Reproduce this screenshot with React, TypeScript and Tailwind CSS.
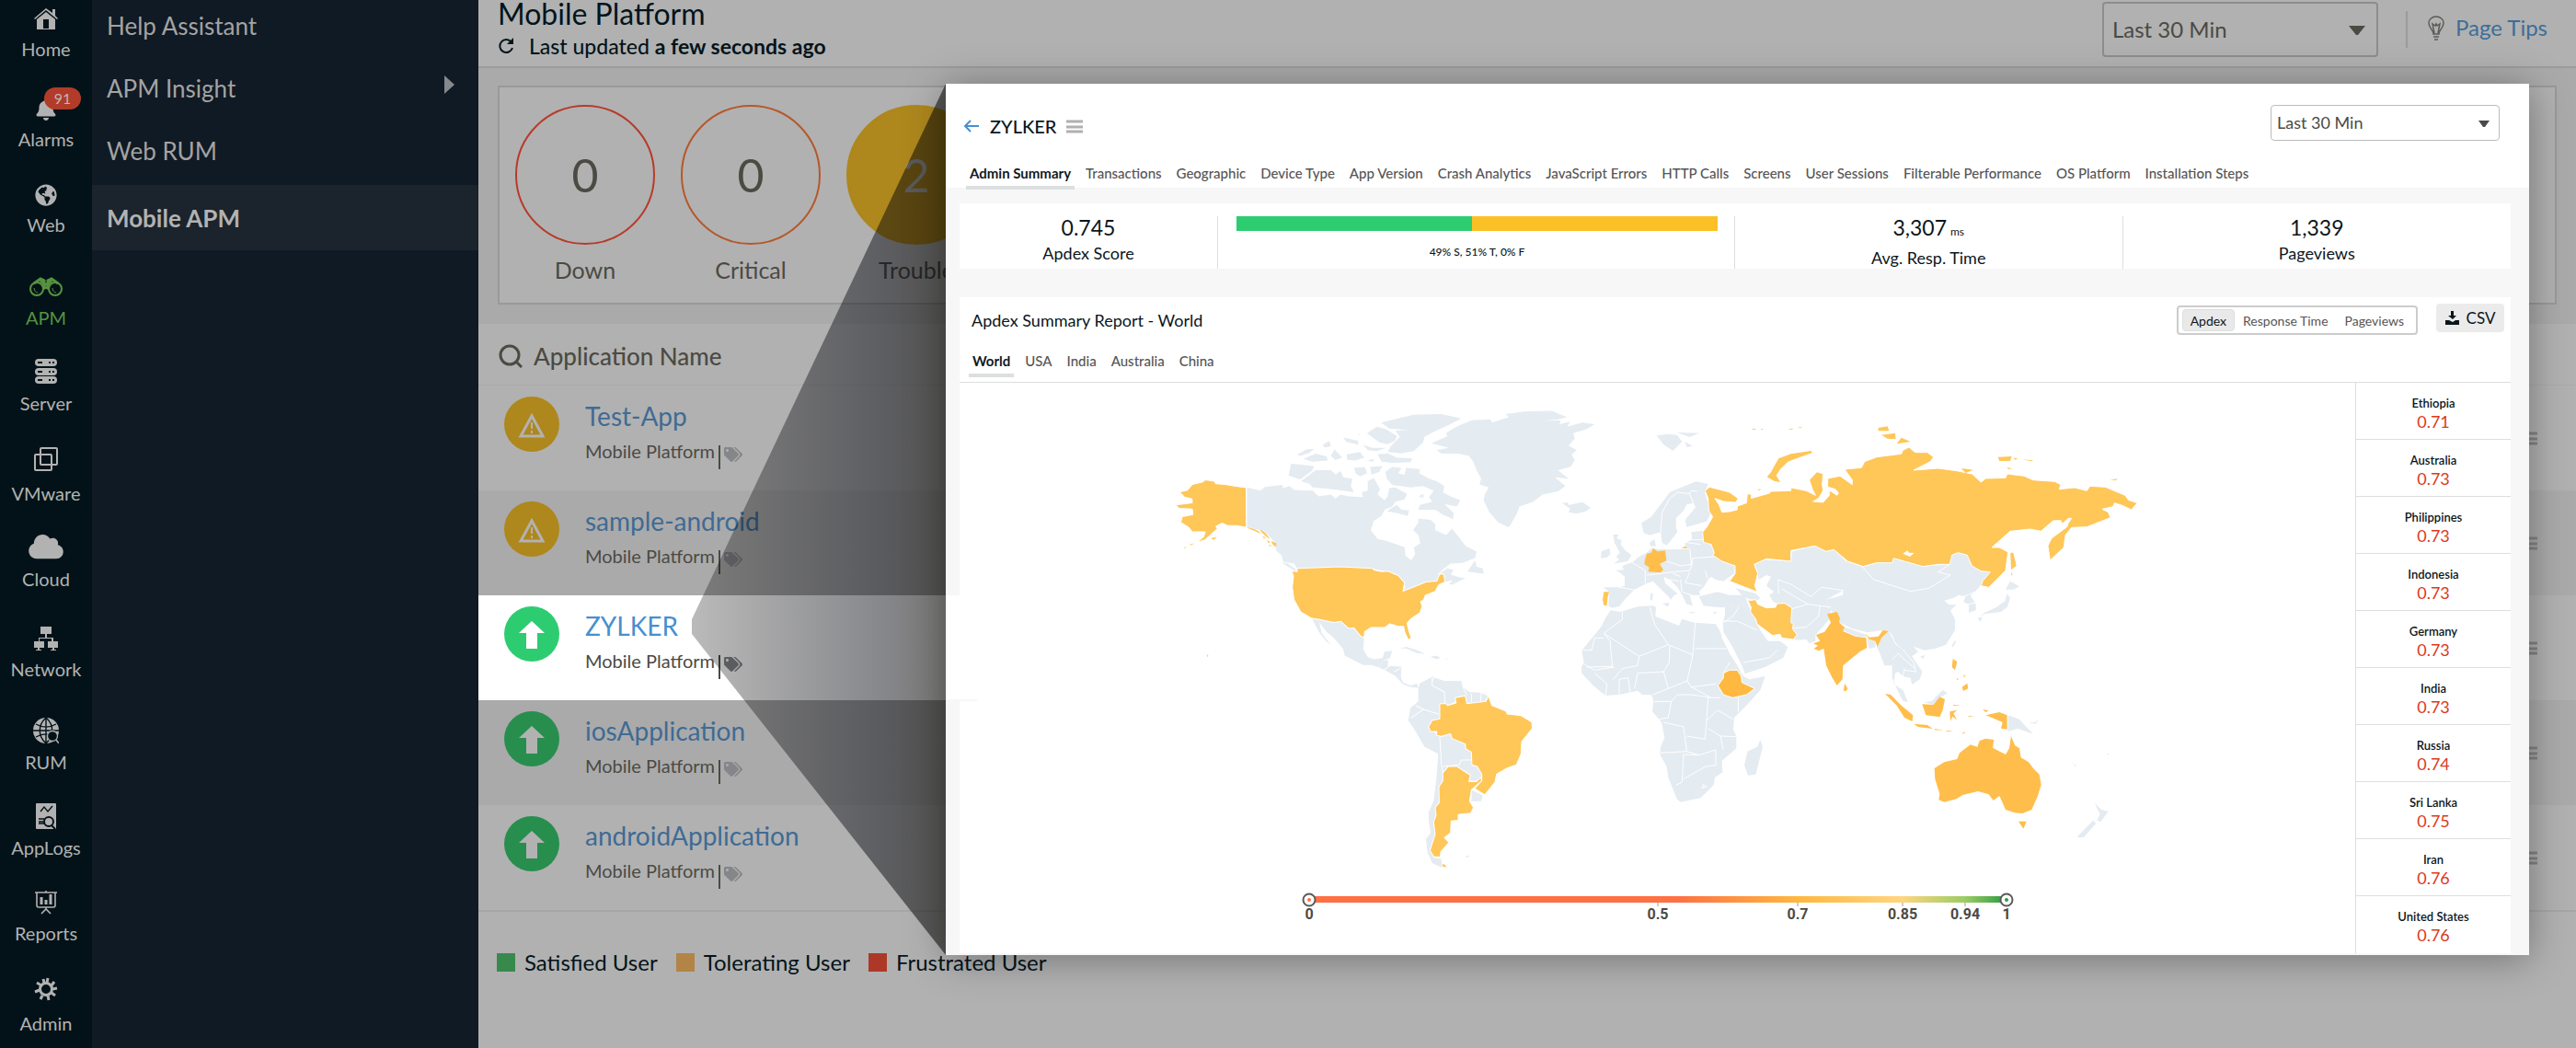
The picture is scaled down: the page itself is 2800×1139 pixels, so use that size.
import { ReactNode } from "react";
import { FaBell, FaCloud, FaGlobeAmericas, FaTags } from "react-icons/fa";

type MenuItem = { label: string; height: string; icon: ReactNode; badge?: string; active?: boolean };
type AppRow = { name: string; status: "trouble" | "up"; spotlight?: boolean };

const svgProps = { fill: "currentColor", stroke: "none" };

const menu: MenuItem[] = [
  {
    label: "Home",
    height: "h-[65px]",
    icon: (
      <svg viewBox="0 0 26 24" className="w-[26px] h-6" {...svgProps}>
        <path d="M13 0 0 11l1 1L13 2l12 10 1-1-3-3V1h-3v4z" />
        <path fillRule="evenodd" d="M13 4 3 12v11h20V12zM10 12h6v10h-6z" />
      </svg>
    ),
  },
  { label: "Alarms", height: "h-[98px]", badge: "91", icon: <FaBell className="w-6 h-6" /> },
  { label: "Web", height: "h-[93px]", icon: <FaGlobeAmericas className="w-6 h-6" /> },
  {
    label: "APM",
    height: "h-[101px]",
    active: true,
    icon: (
      <svg viewBox="0 0 36 24" className="w-9 h-6" fill="none" stroke="currentColor" strokeWidth="2">
        <circle cx="8" cy="13" r="7" />
        <circle cx="28" cy="13" r="7" />
        <path d="M5 7 12 2l4 2v8M31 7l-7-5-4 2v8M15 13c2-2 4-2 6 0M12 4l4 4h4l4-4" strokeWidth="3" />
        <path d="M5 12c0 3 2 5 4 5M25 12c0 3 2 5 4 5" strokeWidth="1" />
      </svg>
    ),
  },
  {
    label: "Server",
    height: "h-[93px]",
    icon: (
      <svg viewBox="0 0 24 28" className="w-6 h-7" {...svgProps}>
        {[0, 10, 19].map((y) => (
          <g key={y}>
            <rect y={y} width="24" height="8" rx="4" />
            <path d={`M3 ${y + 4}h5M15 ${y + 4}h2M19 ${y + 4}h2`} stroke="#031218" strokeWidth="2" />
          </g>
        ))}
      </svg>
    ),
  },
  {
    label: "VMware",
    height: "h-[98px]",
    icon: (
      <svg viewBox="0 0 26 26" className="w-[26px] h-[26px] mb-1" fill="none" stroke="currentColor" strokeWidth="2">
        <rect x="7" y="1" width="18" height="18" rx="1" />
        <rect x="1" y="8" width="18" height="17" rx="1" />
      </svg>
    ),
  },
  { label: "Cloud", height: "h-[93px]", icon: <FaCloud className="w-[38px] h-[30px]" /> },
  {
    label: "Network",
    height: "h-[98px]",
    icon: (
      <svg viewBox="0 0 26 26" className="w-[26px] h-[26px]" {...svgProps}>
        <path d="M7 0h12v8H7zM12 8h2v4h7v4h5v7h-4v2h2v1h-6v-1h2v-2h-5v-7h4v-3H6v3h5v7H6v2h2v1H2v-1h2v-2H0v-7h5v-4h7zM8 6h10v1H8z" />
      </svg>
    ),
  },
  {
    label: "RUM",
    height: "h-[101px]",
    icon: (
      <svg viewBox="0 0 28 28" className="w-7 h-7">
        <circle cx="14" cy="14" r="14" fill="currentColor" />
        <path
          d="M14 0v28M0 14h28M3 7c7 4 15 4 22 0M3 21c7-4 15-4 22 0M14 0c-9 8-9 20 0 28M14 0c9 8 9 20 0 28"
          fill="none"
          stroke="#031218"
          strokeWidth="1.4"
        />
        <circle cx="21" cy="20" r="5.5" fill="#031218" stroke="currentColor" strokeWidth="1.3" />
        <path d="m25 24 3 4" stroke="currentColor" strokeWidth="1.6" />
      </svg>
    ),
  },
  {
    label: "AppLogs",
    height: "h-[93px]",
    icon: (
      <svg viewBox="0 0 22 28" className="w-[22px] h-7">
        <rect width="22" height="28" rx="1" fill="currentColor" />
        <g fill="none" stroke="#031218" strokeWidth="1.4">
          <path d="m5 9 4-5 4 5 5-6M3 17h6M3 20h5M3 22h6" />
          <circle cx="14" cy="20" r="5" strokeWidth="2" />
          <path d="m17 24 4 4" strokeWidth="2" />
        </g>
      </svg>
    ),
  },
  {
    label: "Reports",
    height: "h-[93px]",
    icon: (
      <svg viewBox="0 0 24 26" className="w-6 h-[26px]" fill="none" stroke="currentColor" strokeWidth="1.6">
        <path d="M0 2h24M12 0v2M2 2v14q0 2 2 2h16q2 0 2-2V2M12 18v3M7 25l5-5 5 5" />
        <path d="M7 7v8M12 10v5M17 4v11" strokeWidth="3" />
      </svg>
    ),
  },
  {
    label: "Admin",
    height: "h-[98px]",
    icon: (
      <svg viewBox="0 0 26 26" className="w-[26px] h-[26px] mb-1" fill="none" stroke="currentColor">
        <circle cx="13" cy="13" r="6.5" strokeWidth="3" />
        <path
          d="M15 1l-1 5M22 5l-3 4M25 12l-5 1M23 20l-4-3M16 25l-1-5M7 24l2-4M1 16l5-2M3 6l5 3M10 2l1 4"
          strokeWidth="3"
        />
      </svg>
    ),
  },
];

const apps: AppRow[] = [
  { name: "Test-App", status: "trouble" },
  { name: "sample-android", status: "trouble" },
  { name: "ZYLKER", status: "up", spotlight: true },
  { name: "iosApplication", status: "up" },
  { name: "androidApplication", status: "up" },
];

const tabs = [
  "Admin Summary",
  "Transactions",
  "Geographic",
  "Device Type",
  "App Version",
  "Crash Analytics",
  "JavaScript Errors",
  "HTTP Calls",
  "Screens",
  "User Sessions",
  "Filterable Performance",
  "OS Platform",
  "Installation Steps",
];

const regions = ["World", "USA", "India", "Australia", "China"];

const scores = [
  ["Ethiopia", "0.71"],
  ["Australia", "0.73"],
  ["Philippines", "0.73"],
  ["Indonesia", "0.73"],
  ["Germany", "0.73"],
  ["India", "0.73"],
  ["Russia", "0.74"],
  ["Sri Lanka", "0.75"],
  ["Iran", "0.76"],
  ["United States", "0.76"],
];

const legend = [
  ["Satisfied User", "bg-[#388a4c]"],
  ["Tolerating User", "bg-[#b28446]"],
  ["Frustrated User", "bg-[#ad3828]"],
];

function Sidebar() {
  return (
    <nav className="w-[100px] shrink-0 bg-[#031218] text-[#b2b2b2]">
      {menu.map((item) => (
        <a
          key={item.label}
          href="#"
          className={`${item.height} ${item.active ? "text-[#57933f]" : ""} flex flex-col items-center justify-end text-[20px] leading-6`}
        >
          <span className="relative mb-2">
            {item.icon}
            {item.badge && (
              <span className="absolute left-[10px] -top-3 w-10 h-6 rounded-full bg-[#b23c2a] text-center text-[16px] leading-6 text-[#c4b5b2]">
                {item.badge}
              </span>
            )}
          </span>
          {item.label}
        </a>
      ))}
    </nav>
  );
}

function SubNav() {
  return (
    <nav className="w-[420px] shrink-0 bg-[#0f1a24] pt-[11px] text-[26px] leading-[34px] text-[#a3a3a3]">
      <ul className="flex flex-col gap-[34px] pl-4">
        <li>
          <a href="#">Help Assistant</a>
        </li>
        <li className="flex items-center justify-between pr-[26px]">
          <a href="#">APM Insight</a>
          <svg viewBox="0 0 11 20" className="w-[11px] h-5 mb-2" fill="#86898c">
            <path d="M0 0l11 10L0 20z" />
          </svg>
        </li>
        <li>
          <a href="#">Web RUM</a>
        </li>
      </ul>
      <a href="#" className="mt-5 flex h-[71px] items-center bg-[#1b232c] pl-4 font-bold text-[#b2b2b2]">
        Mobile APM
      </a>
    </nav>
  );
}

function StatusIcon({ app }: { app: AppRow }) {
  if (app.status === "trouble") {
    return (
      <svg viewBox="0 0 60 60" className="w-[60px] h-[60px]">
        <circle cx="30" cy="30" r="30" fill="#ae871d" />
        <path d="M30 21 18 43h24z" fill="none" stroke="#b2b2b2" strokeWidth="3" />
        <path d="M30 28v7M30 37v3" stroke="#b2b2b2" strokeWidth="2" />
      </svg>
    );
  }
  return (
    <svg viewBox="0 0 60 60" className="w-[60px] h-[60px]">
      <circle cx="30" cy="30" r="30" fill={app.spotlight ? "#2ecc71" : "#288e4e"} />
      <path d="M30 16 44 29h-8v17H24V29h-8z" fill={app.spotlight ? "#ffffff" : "#b2b2b2"} />
    </svg>
  );
}

function Bars({ className }: { className: string }) {
  return (
    <svg viewBox="0 0 18 15" className={className} stroke="currentColor" strokeWidth="3">
      <path d="M0 2h18M0 8h18M0 13h18" />
    </svg>
  );
}

function Dashboard() {
  return (
    <main className="min-w-0 flex-1 bg-[#b1b1b1] text-[#03141a]">
      <header className="flex h-[74px] justify-between border-b-2 border-[#9b9b9b] pl-[21px] pr-[31px]">
        <div>
          <h1 className="text-[32px] leading-[30px]">Mobile Platform</h1>
          <p className="mt-2 flex items-center text-[23px] leading-6">
            <svg viewBox="0 0 18 18" className="mr-4 w-[18px] h-[18px]" fill="none" stroke="currentColor" strokeWidth="2">
              <path d="M15 5a7 7 0 1 0 1 6" />
              <path d="M17 0v7h-7z" fill="currentColor" stroke="none" />
            </svg>
            <span className="font-medium">
              Last updated <b>a few seconds ago</b>
            </span>
          </p>
        </div>
        <div className="flex items-start text-[24px]">
          <div className="relative mt-[2px]">
            <select
              aria-label="Dashboard period"
              className="h-[60px] w-[300px] appearance-none rounded border-2 border-[#8d8d8d] pl-[9px] text-[#4b4a43]"
            >
              <option>Last 30 Min</option>
            </select>
            <svg viewBox="0 0 18 10" className="absolute right-[14px] top-[26px] w-[18px] h-[10px]" fill="#4b4a43">
              <path d="M0 0h18l-8 10H8z" />
            </svg>
          </div>
          <div className="ml-[30px] mt-3 h-10 w-[2px] bg-[#9b9b9b]" />
          <a href="#" className="ml-[22px] mt-3 flex items-center gap-3 leading-9 text-[#3d6e98]">
            <svg viewBox="0 0 18 27" className="w-[18px] h-[27px]" fill="none" stroke="#5a5a58" strokeWidth="1.5">
              <path d="M6 20c0-5-5-6-5-12a8 7 0 0 1 16 0c0 6-5 7-5 12zM7 19 5 9l3 2 1-2 1 2 3-2-2 10M6 23h6M7 26h4" />
            </svg>
            Page Tips
          </a>
        </div>
      </header>

      <section className="bg-[#aaaaaa] px-[21px] pb-[21px] pt-[19px]">
        <div className="flex h-[238px] gap-7 border-2 border-[#999999] bg-[#b1b1b1] pl-[17px] pt-[19px] text-[25px] leading-[30px] text-[#4b4a43]">
          {[
            ["Down", "0", "border-[#b83a2a]"],
            ["Critical", "0", "border-[#b5582a]"],
            ["Trouble", "2", "border-[#ae871d] bg-[#ae871d] text-[#b2b2b2]"],
          ].map(([label, count, style]) => (
            <div key={label} className="text-center">
              <div className={`${style} flex h-[152px] w-[152px] items-center justify-center rounded-full border-2 text-[50px]`}>
                {count}
              </div>
              <div className="mt-3">{label}</div>
            </div>
          ))}
        </div>
      </section>

      <div className="flex h-[67px] items-center gap-3 border-b border-[#a9a9a9] pb-1 pl-[22px] pt-2 text-[26px] font-medium text-[#4b4a43]">
        <svg viewBox="0 0 26 26" className="w-[26px] h-[26px]" fill="none" stroke="currentColor" strokeWidth="3">
          <circle cx="12" cy="12" r="10" />
          <path d="m19 19 6 6" />
        </svg>
        Application Name
      </div>
      <ul className="border-b-2 border-[#a6a6a6]">
        {apps.map((app, i) => (
          <li key={app.name} className={`${i % 2 ? "bg-[#aaaaaa]" : ""} flex h-[114px] items-center justify-between pr-[42px]`}>
            <div className={`${app.spotlight ? "bg-white" : ""} flex h-[114px] w-[508px] gap-7 pl-7`}>
              <div className="mt-3">
                <StatusIcon app={app} />
              </div>
              <div className="pt-[17px]">
                <a href="#" className={`${app.spotlight ? "text-[#468fd0]" : "text-[#3f6b94]"} block text-[28px] leading-8`}>
                  {app.name}
                </a>
                <div className="mt-[10px] flex text-[20px] leading-6 text-[#4b4a43]">
                  Mobile Platform
                  <span className="ml-1 mt-[6px] h-[26px] w-[2px] bg-[#4b4a43]" />
                  <FaTags className="ml-1 mt-[6px] h-5 w-5 text-[#85868a]" />
                </div>
              </div>
            </div>
            <Bars className="h-[15px] w-[18px] text-[#848484]" />
          </li>
        ))}
      </ul>

      <ul className="mt-10 flex gap-5 pl-5 text-[24px] leading-[30px]">
        {legend.map(([label, color]) => (
          <li key={label} className="flex items-center gap-[10px]">
            <span className={`${color} h-5 w-5`} />
            {label}
          </li>
        ))}
      </ul>
    </main>
  );
}

// Americas are on their own grid, everything east of Iceland shares the second one
function WorldMap() {
  return (
    <svg viewBox="1043 416 1517 620" className="h-[620px] min-w-0 flex-1" role="img" aria-label="Apdex by country">
      <defs>
        <linearGradient id="scale">
          <stop offset="0" stopColor="#ff7043" />
          <stop offset="0.53" stopColor="#ff7043" />
          <stop offset="0.7" stopColor="#ffb740" />
          <stop offset="0.85" stopColor="#ffd580" />
          <stop offset="0.94" stopColor="#9ccc65" />
          <stop offset="1" stopColor="#2e9a41" />
        </linearGradient>
      </defs>

      <g transform="translate(1260 430) scale(.33333 .34437)" strokeLinejoin="round">
        <g fill="#e4ebf1">
          <path d="M888 150 940 128 935 118 975 95 1020 78 1080 75 1085 85 1140 68 1130 58 1190 50 1280 48 1330 68 1300 75 1250 80 1310 78 1305 90 1340 82 1330 98 1380 85 1420 90 1395 105 1350 118 1355 135 1335 158 1362 172 1345 185 1355 205 1340 225 1300 235 1335 262 1290 258 1325 285 1300 302 1250 312 1220 335 1175 350 1165 375 1150 400 1140 415 1105 400 1075 365 1058 330 1062 310 1075 290 1045 280 1050 262 1035 235 1025 210 1010 190 975 183 920 183 905 172 945 165Z" />
          <path d="M724 85 780 72 830 60 920 58 985 72 950 90 900 112 865 130 860 148 830 175 790 182 745 178 755 160 785 130 770 110 820 108 750 104Z" />
          <path d="M678 118 710 98 740 106 775 128 768 142 745 153 720 148 700 135Z" />
          <path d="M712 185 745 182 775 195 825 198 820 210 760 212 725 208Z" />
          <path d="M450 186 480 170 506 168 490 180 460 190ZM470 200 510 183 545 192 550 205 500 208ZM533 155 555 143 560 160 540 164ZM600 132 648 142 650 155 610 145ZM612 185 655 178 668 195 640 205 612 202ZM665 155 695 165 740 165 710 175 680 172ZM560 190 572 170 597 195 575 203ZM648 118 656 122 650 124ZM678 205 700 200 698 208Z" />
          <path d="M430 215 505 222 500 235 460 265 422 252Z" />
          <path d="M462 270 510 235 560 235 575 248 592 238 600 258 630 262 625 285 635 305 600 300 560 295 500 290 490 278ZM636 228 670 225 678 245 655 255 640 245ZM688 225 728 222 718 240 692 250Z" />
          <path d="M738 240 760 225 790 228 780 245 800 250 805 228 850 232 848 245 880 262 905 270 930 285 925 305 950 318 982 330 970 350 930 342 960 370 958 390 925 375 900 360 845 360 850 345 890 335 880 320 895 300 860 285 820 290 760 282 742 262Z" />
          <path d="M742 365 775 345 790 360 815 362 810 380 775 370ZM845 318 862 310 862 322Z" />
          <path d="M286 290 330 300 345 288 400 282 405 292 425 285 440 298 500 300 520 318 560 312 575 325 590 312 620 318 665 320 660 305 680 300 680 270 700 260 720 295 712 312 735 330 745 318 750 292 770 290 808 310 800 328 770 335 760 350 735 360 725 380 700 395 690 425 712 452 740 458 800 478 803 505 822 520 835 500 830 480 852 465 845 440 828 425 845 400 845 388 885 392 900 405 900 425 935 440 955 420 980 450 1000 475 1035 492 1030 512 990 528 950 530 925 548 905 568 940 545 960 550 950 565 985 575 1000 575 955 597 945 595 958 582 932 588 928 566 915 566 905 585 870 588 835 602 795 617 803 605 798 585 770 562 740 556 695 545 450 545 440 530 405 525 400 505 382 490 380 465 345 430 330 425 310 420 286 412Z" />
          <path d="M1005 555 1030 520 1035 540 1055 545 1058 562ZM398 526 420 530 450 552 440 552Z" />
          <path d="M498 703 520 706 570 716 592 712 618 735 635 733 655 757 668 764 665 800 680 825 700 832 728 828 735 808 760 805 752 828 728 836 718 858 690 850 665 850 605 820 600 800 570 765 545 745 522 715 530 750 560 788 545 775 520 745Z" />
          <path d="M718 858 728 836 748 834 745 853 790 855 788 890 795 905 820 915 840 908 845 922 820 920 795 910 770 885 735 865Z" />
          <path d="M785 798 805 793 840 803 868 815 840 812 805 798ZM885 825 900 820 918 826 905 832ZM842 830 850 832ZM935 830 944 832 936 833Z" />
          <path d="M845 922 850 908 895 885 890 905 898 890 930 900 985 900 990 918 1010 935 1050 938 1072 948 1060 965 1003 972 998 950 965 955 968 965 940 978 915 972 915 1020 885 1030 880 1045 905 1070 920 1078 950 1067 955 1082 998 1100 1000 1115 1018 1125 1020 1165 1037 1170 1052 1190 1048 1215 1010 1215 1015 1198 970 1170 943 1170 925 1190 925 1215 912 1235 913 1285 900 1300 903 1325 895 1345 900 1385 883 1430 895 1458 920 1462 922 1490 890 1475 875 1440 870 1400 885 1380 880 1350 878 1315 895 1280 905 1200 910 1130 865 1108 830 1050 812 1025 820 985 845 965Z" />
          <path d="M1020 1245 1055 1262 1050 1280 1018 1280ZM998 1453 1014 1452 1004 1458Z" />
        </g>
        <path
          d="M890 890V915L930 935 932 978M990 918 1003 945M820 1018 862 990 835 978M862 990 910 1005M915 1075 920 1160 925 1190M925 1170 978 1165 985 1150 1018 1150M1018 940V968M1050 938 1048 968M748 834V855L735 865M788 860 765 872"
          fill="none"
          stroke="#fff"
          strokeWidth="3"
        />
        <g fill="#ffc658" stroke="#fff" strokeWidth="3">
          <path d="M284 290 245 285 215 280 185 278 180 270 150 266 140 273 108 280 92 298 66 304 82 320 107 326 108 338 54 345 65 356 108 358 110 375 75 382 70 400 95 415 108 430 150 430 145 445 120 464 150 455 172 435 190 420 185 412 205 402 222 410 250 410 284 415Z" />
          <path d="M450 545 590 540 695 545 700 550 725 555 745 554 780 568 800 590 795 617 835 602 870 588 905 585 915 563 928 563 932 588 912 597 900 618 868 630 862 645 852 650 858 665 850 685 820 705 808 718 815 745 822 765 812 771 800 745 797 728 780 728 752 720 735 732 690 732 670 745 668 764 655 757 635 733 618 735 592 712 570 716 520 706 498 703 462 683 440 645 434 605 438 570 432 553 450 555Z" />
          <path d="M915 972 935 972 940 978 968 970 965 953 998 947 1003 972 1065 965 1074 948 1085 978 1130 995 1135 1005 1180 1010 1215 1030 1217 1050 1182 1092 1180 1130 1165 1165 1135 1175 1100 1195 1095 1220 1062 1260 1028 1240 1052 1215 1052 1195 1037 1170 1020 1165 1018 1125 1000 1115 998 1100 955 1082 950 1067 920 1075 905 1072 905 1060 885 1060 878 1045 890 1025 915 1020 915 990Z" />
          <path d="M943 1170 970 1170 1015 1198 1010 1218 1035 1218 1048 1205 1052 1215 1018 1245 1012 1280 1025 1300 1015 1318 975 1322 975 1340 952 1342 950 1380 930 1395 945 1410 918 1440 917 1456 895 1455 883 1435 900 1385 895 1345 903 1325 900 1300 913 1285 912 1235 925 1215 925 1190Z" />
          <path d="M923 1472 943 1490 923 1488Z" />
        </g>
        <path
          d="M284 414 308 420 325 428 330 436 318 430 290 418ZM328 422 345 432 362 452 350 446 332 430ZM365 458 382 466 381 478 370 470ZM338 442 346 448 342 452ZM352 456 362 462 356 466ZM358 470 366 474 360 476ZM168 450 188 446 178 455ZM80 479 88 477 84 482ZM98 470 115 466 104 472ZM155 816 161 822 157 825Z"
          fill="#ffc658"
        />
      </g>

      <g transform="translate(1680 430) scale(.33333)" strokeLinejoin="round">
        <g fill="#e4ebf1">
          <path d="M54 350 72 348 75 357 120 347 147 365 130 378 100 385 75 380 80 368Z" />
          <path d="M220 452 238 453 232 465 248 472 245 485 260 505 280 520 268 540 222 548 240 535 230 525 242 512 225 480ZM180 530 182 508 208 498 212 515 200 528Z" />
          <path d="M362 130 400 125 428 128 445 150 415 180 385 160ZM428 120 500 122 470 135ZM455 150 480 165 460 168Z" />
          <path d="M312 415 345 395 375 355 405 315 440 300 490 280 530 288 525 300 520 320 540 380 525 410 460 428 455 405 488 365 480 350 460 355 450 375 425 400 425 430 430 445 410 470 395 488 380 480 375 445 340 455 320 448Z" />
          <path d="M338 480 355 468 360 490 345 492Z" />
          <path d="M188 625 240 625 290 632 262 660 240 688 215 692 205 685 208 640Z" />
          <path d="M228 570 255 568 250 555 285 542 305 525 325 515 345 498 365 500 400 502 470 500 455 490 455 478 478 470 475 445 512 440 515 475 545 490 550 515 575 540 618 555 615 580 600 590 580 605 555 600 540 590 530 600 515 625 500 640 505 650 470 650 480 685 460 680 445 650 430 625 405 600 385 590 390 612 430 645 420 650 408 665 400 655 350 605 330 612 290 632 240 625 258 620 258 590 240 575Z" />
          <path d="M380 678 403 675 400 688ZM342 645 350 645 348 668 341 665ZM465 705 490 706 478 710ZM545 708 560 703 552 712Z" />
          <path d="M500 655 560 640 600 650 650 650 660 680 600 690 560 690 515 685Z" />
          <path d="M620 628 685 645 700 660 690 668 660 662 640 650Z" />
          <path d="M585 690 600 690 660 680 672 705 690 745 700 765 725 800 765 800 790 820 775 855 715 885 650 907 640 880 610 820 580 770 578 740 585 715Z" />
          <path d="M212 700 245 705 300 688 350 685 360 690 358 720 435 750 445 728 485 740 555 745 570 770 575 790 600 840 625 880 645 915 665 925 716 915 700 960 660 1005 615 1050 612 1090 622 1110 622 1150 575 1190 577 1228 552 1245 548 1270 505 1312 440 1325 428 1315 400 1245 395 1210 373 1170 375 1145 388 1115 378 1065 348 1030 352 995 345 975 315 975 300 962 240 975 195 978 155 945 118 905 117 885 125 870 118 830 160 780 182 752 195 725Z" />
          <path d="M700 1122 708 1145 685 1235 660 1238 648 1205 658 1160 690 1145Z" />
          <path d="M680 550 710 535 800 540 805 508 878 490 915 508 940 502 980 540 1035 560 1020 580 1000 590 970 635 915 665 930 700 925 730 880 780 880 800 860 808 850 795 815 797 805 760 800 740 803 692 780 677 755 678 740 670 730 650 745 640 720 620 735 590 720 585 695 600 690 570Z" />
          <path d="M915 665 970 650 970 635 1000 590 1035 560 1080 545 1130 545 1135 530 1230 557 1318 550 1325 520 1345 512 1375 520 1390 555 1420 572 1450 575 1440 595 1400 640 1385 652 1403 680 1403 700 1380 708 1380 680 1362 672 1370 655 1345 650 1335 658 1300 668 1315 682 1340 682 1320 700 1335 730 1335 765 1305 812 1270 825 1235 830 1205 820 1165 828 1140 805 1130 780 1118 768 1100 765 1050 772 1000 760 960 740 960 725 930 700Z" />
          <path d="M970 752 1045 780 1045 788 1010 783 970 765ZM1048 795 1075 800 1075 820 1055 825Z" />
          <path d="M1118 768 1130 790 1140 810 1165 828 1200 820 1215 835 1195 850 1228 900 1220 925 1195 942 1190 920 1165 915 1150 900 1140 905 1135 940 1165 960 1182 1000 1165 995 1145 955 1130 920 1130 880 1105 880 1090 840 1080 820 1095 790Z" />
          <path d="M1515 605 1545 622 1525 632 1500 632ZM1505 645 1515 660 1505 690 1485 705 1430 712 1410 725 1430 708 1470 690 1498 670ZM1408 725 1425 722 1418 738ZM1335 797 1338 802 1328 822 1325 814ZM1222 850 1238 846 1230 859Z" />
          <path d="M1235 1000 1260 995 1295 960 1310 970 1285 985 1265 1008ZM1508 1042 1545 1055 1565 1078 1590 1103 1540 1085 1508 1095ZM1575 1066 1595 1065 1608 1055 1598 1070Z" />
          <path d="M1790 1328 1812 1350 1835 1355 1810 1390 1798 1385 1808 1365ZM1785 1385 1795 1395 1755 1440 1732 1440ZM1715 1195 1732 1208 1728 1209ZM1828 1168 1836 1166 1834 1172Z" />
        </g>
        <path
          d="M375 445 380 380 405 335 430 315 468 320 475 310 495 312M470 320 488 365M455 478 505 485M478 470 512 470M470 500 475 550 480 530 550 525M394 540 440 555 475 550M330 585 375 580 415 575 470 570 480 545M440 590 415 580M470 575 455 610 510 620M440 600 445 640 475 650M405 600 435 605M283 545 325 570V612M520 570 528 595M240 625 292 634M580 735 625 735 690 765M645 870 730 855 755 830M630 690 610 720 580 740M190 775 305 850 400 812 355 745 340 690M190 775 250 730V705M210 800 218 883 135 885M190 775 210 800M305 850 300 880 250 890 220 925M405 815 403 870 385 900 300 905 290 955M400 812 480 845 488 740M488 825H590M480 845 462 930 475 950 540 985 570 985M462 930 400 955 350 975M385 900 400 955M355 997H410L430 975 475 975 540 985M410 997 400 1050 370 1055M385 1065 450 1080 460 1160 375 1165M460 1110 520 1120 525 1060 530 985M525 1060 560 1025 612 1055M628 985V1030M570 1110 620 1112M530 1085 570 1110 580 1155M450 1170 445 1260 425 1270M450 1170 500 1172 555 1155V1205L520 1210 450 1250M460 1160 500 1172M510 1280 525 1275 515 1268ZM125 875 160 895 225 885M195 978 200 940 160 905M240 975V925L270 920 275 968M120 830H150L160 790H190M475 950 555 940M600 870 580 905M760 645 758 600 800 615 865 655 900 625 970 635M770 630 855 680 895 685 930 690M803 695 855 680M895 685 890 720 850 755 810 758M1035 560 1070 600 1190 638 1250 628 1320 585 1280 575 1318 550M1362 655 1400 640M1380 680 1403 675M1130 860 1150 840 1175 865 1205 890M1165 828 1200 870 1208 900 1170 895M1165 915 1170 890"
          fill="none"
          stroke="#fff"
          strokeWidth="3"
        />
        <g fill="#ffc658" stroke="#fff" strokeWidth="3">
          <path d="M520 310 535 298 600 315 628 335 620 348 580 345 552 335 565 355 575 380 600 378 625 372 625 360 655 350 658 320 672 322 670 335 730 318 735 312 800 310 800 300 850 310 880 325 870 305 860 275 885 248 905 255 902 290 905 310 890 335 872 345 905 348 925 325 925 308 950 325 955 318 945 305 920 298 920 270 960 262 1000 290 1000 275 975 240 1030 235 1040 215 1080 200 1160 190 1165 178 1185 168 1205 185 1245 185 1265 200 1255 215 1200 243 1280 237 1340 245 1390 255 1420 282 1435 270 1500 268 1505 255 1560 262 1590 275 1660 280 1680 290 1675 305 1725 300 1765 310 1775 295 1825 298 1890 325 1900 340 1930 350 1910 372 1880 358 1855 350 1850 362 1815 370 1835 380 1842 398 1765 428 1715 430 1695 455 1690 495 1645 537 1638 490 1650 465 1700 428 1705 415 1715 400 1705 400 1685 418 1680 407 1655 408 1615 442 1580 435 1515 442 1455 495 1480 495 1495 503 1508 510 1500 570 1445 625 1420 620 1425 605 1450 575 1420 572 1390 555 1375 520 1345 512 1325 520 1318 550 1280 550 1230 557 1135 530 1130 545 1080 545 1035 557 985 540 940 502 915 508 878 490 800 505 800 540 720 532 680 550 692 580 682 620 690 640 600 605 618 580 618 555 575 540 545 520 550 512 540 485 515 478 512 445 525 430 545 395 532 375 530 335Z" />
          <path d="M657 662 665 668 685 665 692 680 720 692 750 690 755 678 780 677 803 692 800 740 808 745 805 760 820 780 808 795 770 790 765 778 740 782 700 752 690 745 685 728 668 705 670 690Z" />
        </g>
        <g fill="#ffc658">
          <path d="M722 265 735 250 740 240 760 205 800 190 865 180 870 186 830 200 790 215 765 240 752 260 765 282 745 278Z" />
          <path d="M1085 105 1115 100 1120 115 1085 115ZM1095 128 1140 122 1142 142 1115 140ZM1145 157 1160 137 1190 150ZM1475 200 1520 198 1515 213 1480 213ZM1525 203 1540 204 1532 209ZM1555 208 1590 211 1585 214ZM1505 234 1525 238 1508 239ZM1355 237 1395 242 1370 252ZM1840 276 1866 271 1860 276ZM1925 385 1942 390ZM670 108 688 109 680 112ZM700 108 712 108 704 111ZM792 108 810 107 800 111ZM822 104 838 101 830 106ZM690 305 704 305 696 309ZM1516 512 1525 512 1535 555 1518 568ZM1518 575 1522 582 1518 588Z" />
          <path d="M190 640 207 640 202 660 200 684 190 684 186 665ZM443 497 455 491 465 498Z" />
        </g>
        <path d="M1165 515 1180 505 1185 512 1202 513 1188 525Z" fill="#fff" />
        <g fill="#ffbe4b">
          <path d="M330 515 345 512 350 497 365 508 390 505 394 538 372 548 384 568 375 577 335 574 338 560 322 550 324 535Z" />
          <path d="M918 712 950 705 960 725 958 740 975 755 970 768 1010 785 1045 790 1048 822 1025 835 970 880 968 925 950 945 935 920 915 880 907 825 890 832 875 825 888 815 873 808 895 800 882 780 910 770 930 740ZM1042 775 1055 788 1085 785 1100 765 1118 768 1095 790 1082 820 1075 800 1055 795Z" />
          <path d="M975 938 985 955 980 963 972 962Z" />
          <path d="M1107 972 1125 975 1160 1010 1198 1042 1196 1062 1170 1050 1145 1010ZM1200 1070 1245 1074 1262 1086 1215 1080ZM1228 1006 1265 1008 1285 982 1302 990 1295 1025 1285 1048 1240 1042ZM1318 1030 1342 1025 1330 1036 1342 1058 1327 1046 1320 1062ZM1328 1008 1355 1010 1332 1012ZM1268 1086 1300 1092 1270 1090ZM1305 1092 1330 1094 1310 1096ZM1358 1100 1370 1095 1362 1103ZM1378 1045 1400 1044 1380 1048ZM1425 1023 1445 1027 1435 1032ZM1435 1042 1480 1032 1505 1042 1505 1088 1485 1085 1490 1065 1455 1050ZM1328 858 1342 868 1335 895 1325 885ZM1358 950 1375 938 1378 955 1362 963ZM1340 920 1347 925 1342 927ZM1362 910 1370 915 1365 918Z" />
          <path d="M1268 1215 1300 1195 1342 1185 1350 1165 1385 1138 1408 1145 1415 1125 1435 1118 1462 1122 1458 1148 1500 1170 1512 1150 1518 1110 1530 1140 1545 1150 1550 1180 1575 1195 1590 1215 1610 1235 1616 1268 1605 1305 1585 1350 1555 1362 1530 1360 1500 1350 1480 1305 1460 1320 1445 1300 1410 1290 1360 1302 1340 1315 1300 1325 1282 1318 1285 1298 1270 1250ZM1542 1388 1568 1388 1558 1412Z" />
        </g>
        <path d="M562 945 580 920 580 905 600 895 625 895 638 915 640 935 682 955 655 975 610 985 580 975Z" fill="#ffb840" stroke="#fff" strokeWidth="3" />
      </g>

      <rect x="1422" y="974" width="759" height="7" fill="url(#scale)" />
      <path d="M1802 981v4M1954 981v4M2068 981v4M2136 981v4" stroke="#999" />
      <g fill="#fff" stroke="#5a5a5a" strokeWidth="2">
        <circle cx="1423" cy="978" r="6.5" />
        <circle cx="2181" cy="978" r="6.5" />
      </g>
      <circle cx="1423" cy="978" r="2" fill="#ff7043" />
      <circle cx="2181" cy="978" r="2" fill="#2e9a41" />
      <g className="font-['Roboto',sans-serif] text-[16px] font-bold" fill="#4b4a46" textAnchor="middle">
        <text x="1423" y="999">0</text>
        <text x="1802" y="999">0.5</text>
        <text x="1954" y="999">0.7</text>
        <text x="2068" y="999">0.85</text>
        <text x="2136" y="999">0.94</text>
        <text x="2181" y="999">1</text>
      </g>
    </svg>
  );
}

function TabRow({ items, label }: { items: string[]; label: string }) {
  return (
    <nav aria-label={label} className="flex gap-2 text-[15px] font-medium leading-6 text-[#555555]">
      {items.map((item, i) => (
        <button
          key={item}
          className={`${i === 0 ? "border-[#dcdfdf] font-bold text-[#111a1f]" : "border-transparent"} whitespace-nowrap border-b-4 px-1 pb-[2px]`}
        >
          {item}
        </button>
      ))}
    </nav>
  );
}

function DetailPanel() {
  return (
    <section className="absolute left-[1028px] right-[51px] top-[91px] bg-white text-[#0b161c] shadow-[0_4px_40px_rgba(0,0,0,0.35)]">
      <header className="relative h-[113px] pl-[19px] pt-[23px]">
        <div className="flex h-[39px] items-end justify-between pr-8">
          <div className="flex items-center text-[20px] leading-8">
            <button aria-label="Back">
              <svg viewBox="0 0 17 14" className="h-[14px] w-[17px]" fill="none" stroke="#468fd0" strokeWidth="2">
                <path d="M17 7H2M8 1 2 7l6 6" />
              </svg>
            </button>
            <h2 className="ml-3 font-medium">ZYLKER</h2>
            <button aria-label="Menu" className="ml-[11px]">
              <Bars className="h-[15px] w-[18px] text-[#b0b0b0]" />
            </button>
          </div>
          <div className="relative">
            <select
              aria-label="Period"
              className="block h-[39px] w-[249px] appearance-none rounded-sm border border-[#bbbbbb] bg-white pl-[6px] text-[18px] text-[#4b4a46]"
            >
              <option>Last 30 Min</option>
            </select>
            <svg viewBox="0 0 12 7" className="absolute right-[11px] top-[17px] h-[7px] w-3" fill="#4b4a46">
              <path d="M0 0h12L7 7H5z" />
            </svg>
          </div>
        </div>
        <div className="mt-[23px] pl-[3px]">
          <TabRow items={tabs} label="Reports" />
        </div>
      </header>

      <div className="bg-[#f7f7f7] pb-[2px] pl-[15px] pr-5 pt-[17px]">
        <div className="grid h-[71px] grid-cols-12 bg-white pb-2 pt-[14px] text-center text-[18px] leading-6">
          <div className="col-span-2 border-r border-[#dcdfdf]">
            <div className="text-[23px]">0.745</div>
            <div className="mt-1">Apdex Score</div>
          </div>
          <div className="col-span-4 border-r border-[#dcdfdf] pl-5 pr-[18px] text-[12px] font-medium">
            <div className="flex h-4">
              <div className="w-[49%] bg-[#2ecc71]" />
              <div className="w-[51%] bg-[#fac026]" />
            </div>
            <div className="mt-[13px] leading-5">49% S, 51% T, 0% F</div>
          </div>
          <div className="col-span-3 border-r border-[#dcdfdf]">
            <div className="text-[23px]">
              3,307<span className="ml-1 text-[12px]">ms</span>
            </div>
            <div className="mt-1">Avg. Resp. Time</div>
          </div>
          <div className="col-span-3">
            <div className="text-[23px]">1,339</div>
            <div className="mt-1">Pageviews</div>
          </div>
        </div>

        <div className="mt-[31px] bg-white">
          <div className="flex h-[50px] items-center pl-[13px] pr-[7px]">
            <h3 className="flex-1 text-[18px]">Apdex Summary Report - World</h3>
            <div className="flex h-8 items-center rounded-sm border-2 border-[#cccccc] px-1 text-[14px] text-[#555555]">
              <button className="h-6 rounded-sm border border-[#dcdfdf] bg-[#e9e9e9] px-2 text-[#0b161c]">Apdex</button>
              <button className="ml-[9px]">Response Time</button>
              <button className="mx-[9px] pl-[9px]">Pageviews</button>
            </div>
            <button className="mb-[5px] ml-5 flex h-[31px] w-[74px] items-center justify-center gap-2 rounded-sm bg-[#ebebeb] text-[17px]">
              <svg viewBox="0 0 15 15" className="h-[15px] w-[15px]" fill="currentColor">
                <path d="M6 0h3v5h3L8 9 3 5h3zM0 10h4l4 2 3-2h4v5H0z" />
              </svg>
              CSV
            </button>
          </div>
          <div className="border-b border-[#dcdfdf] pb-[5px] pl-[10px] pt-[7px]">
            <TabRow items={regions} label="Regions" />
          </div>
          <div className="flex">
            <WorldMap />
            <ul className="w-[169px] border-l border-[#dcdfdf] text-center">
              {scores.map(([country, score]) => (
                <li key={country} className="h-[62px] border-b border-[#dcdfdf] pt-[10px] last:border-b-0">
                  <div className="text-[13px] font-semibold leading-6">{country}</div>
                  <div className="text-[18px] leading-4 text-[#dd3a1b]">{score}</div>
                </li>
              ))}
            </ul>
          </div>
        </div>
      </div>
      <div className="absolute left-0 top-[556px] h-[115px] w-[34px] border-b-2 border-[#f7f7f7] bg-white" />
    </section>
  );
}

export default function App() {
  return (
    <div className="relative flex min-h-screen overflow-hidden font-['Lato',sans-serif]">
      <Sidebar />
      <SubNav />
      <Dashboard />
      <svg viewBox="0 0 276 947" className="pointer-events-none absolute left-[752px] top-[91px] h-[947px] w-[276px]">
        <defs>
          <linearGradient id="beam">
            <stop offset="0" stopColor="#000" stopOpacity="0.27" />
            <stop offset="0.7" stopColor="#00020a" stopOpacity="0.46" />
            <stop offset="1" stopColor="#040300" stopOpacity="0.54" />
          </linearGradient>
        </defs>
        <path d="M0 582 276 0V947L0 598Z" fill="url(#beam)" />
      </svg>
      <DetailPanel />
    </div>
  );
}
